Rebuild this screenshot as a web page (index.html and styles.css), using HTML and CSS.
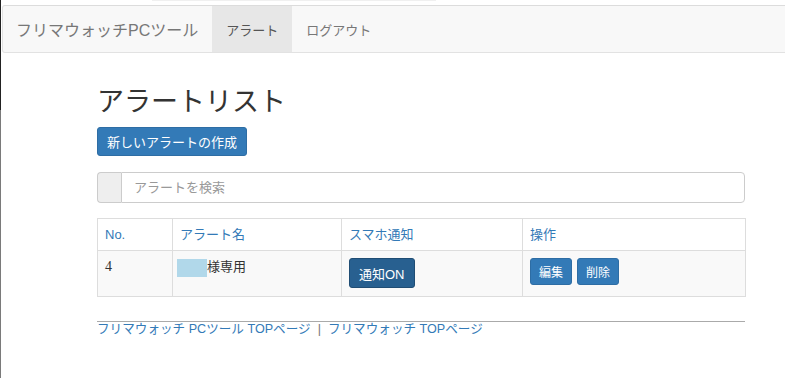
FILE: index.html
```html
<!DOCTYPE html>
<html lang="ja">
<head>
<meta charset="utf-8">
<title>アラートリスト</title>
<link rel="stylesheet" href="styles.css">
</head>
<body>
<div class="edge"></div>
<div class="page">
  <div class="topstrip"><span class="topbar"></span></div>
  <nav class="navbar">
    <a class="brand" href="#">フリマウォッチPCツール</a>
    <a class="nav-item active" href="#">アラート</a>
    <a class="nav-item" href="#">ログアウト</a>
  </nav>
  <main class="container">
    <h1 class="title">アラートリスト</h1>
    <button class="btn btn-primary btn-new">新しいアラートの作成</button>
    <div class="input-group">
      <span class="addon"></span>
      <input class="search" type="text" placeholder="アラートを検索">
    </div>
    <table class="table">
      <colgroup>
        <col class="c1"><col class="c2"><col class="c3"><col class="c4">
      </colgroup>
      <thead>
        <tr><th><a href="#">No.</a></th><th><a href="#">アラート名</a></th><th><a href="#">スマホ通知</a></th><th><a href="#">操作</a></th></tr>
      </thead>
      <tbody>
        <tr>
          <td class="num">4</td>
          <td><span class="redact"></span>様専用</td>
          <td><button class="btn btn-on">通知ON</button></td>
          <td><div class="ops"><button class="btn btn-primary btn-sm">編集</button><button class="btn btn-primary btn-sm">削除</button></div></td>
        </tr>
      </tbody>
    </table>
    <footer class="footer">
      <a href="#">フリマウォッチ PCツール TOPページ</a><span class="sep">|</span><a href="#">フリマウォッチ TOPページ</a>
    </footer>
  </main>
</div>
</body>
</html>
```
FILE: styles.css
```css
* { box-sizing: border-box; }
html, body { margin: 0; padding: 0; background: #fff; }
body {
  display: flex;
  min-height: 378px;
  font-family: "Liberation Sans", "Noto Sans CJK JP", sans-serif;
  font-size: 13px;
  color: #333;
  overflow: hidden;
}
a { text-decoration: none; color: #337ab7; }
.edge {
  width: 1px;
  flex: none;
  background: linear-gradient(#222 0, #222 110px, #7a7a7a 110px, #7a7a7a 100%);
}
.page { flex: 1; min-width: 0; padding-left: 1px; }
.topstrip { height: 5px; position: relative; }
.topbar {
  display: block;
  margin-left: 150px;
  width: 284px;
  height: 1px;
  background: #f0f0f0;
}
.navbar {
  display: flex;
  align-items: stretch;
  height: 48px;
  margin-right: -10px;
  background: #f8f8f8;
  border: 1px solid #e2e2e2;
  border-top-color: #dcdcdc;
  border-radius: 3px 0 0 3px;
}
.brand {
  display: flex;
  align-items: center;
  padding: 0 14px 0 13px;
  font-size: 16px;
  color: #777;
}
.nav-item {
  display: flex;
  align-items: center;
  padding: 0 14px 0 14px;
  color: #777;
  font-size: 13px;
}
.nav-item.active { background: #e7e7e7; color: #555; }
.container {
  width: 648px;
  margin-left: 95px;
}
.title {
  margin: 33px 0 0;
  font-size: 27px;
  font-weight: 400;
  line-height: 32px;
  color: #333;
}
.btn {
  font-family: inherit;
  border-radius: 3px;
  cursor: pointer;
  color: #fff;
}
.btn-primary { background: #337ab7; border: 1px solid #2e6da4; }
.btn-new {
  display: block;
  margin-top: 9px;
  height: 29px;
  padding: 0 9px;
  font-size: 13px;
}
.input-group {
  display: flex;
  margin-top: 16px;
  height: 31px;
}
.addon {
  width: 24px;
  flex: none;
  background: #eee;
  border: 1px solid #ccc;
  border-right: none;
  border-radius: 4px 0 0 4px;
}
.search {
  flex: 1;
  min-width: 0;
  border: 1px solid #ccc;
  border-radius: 0 4px 4px 0;
  padding: 0 12px;
  font-family: inherit;
  font-size: 13px;
  color: #555;
  outline: none;
}
.search::placeholder { color: #999; }
.table {
  width: 648px;
  margin-top: 15px;
  border-collapse: collapse;
  table-layout: fixed;
}
.c1 { width: 75px; }
.c2 { width: 169px; }
.c3 { width: 181px; }
.c4 { width: 223px; }
.table th, .table td {
  border: 1px solid #ddd;
  text-align: left;
  vertical-align: top;
  font-size: 13px;
}
.table th {
  font-weight: 400;
  padding: 7px 7px;
  height: 32px;
  line-height: 17px;
}
.table td {
  background: #f9f9f9;
  padding: 7px 7px;
  height: 46px;
  line-height: 18px;
}
.table td.num { font-family: "Liberation Serif", serif; font-size: 14px; }
.redact {
  display: inline-block;
  width: 30px;
  height: 18px;
  margin-left: -3px;
  vertical-align: top;
  margin-top: 1px;
  background: #b1d8ea;
}
.btn-on {
  display: block;
  height: 30px;
  padding: 0 9px;
  font-size: 13px;
  background: #286090;
  border: 1px solid #204d74;
  border-radius: 3px;
}
.ops { display: flex; gap: 5px; }
.btn-sm {
  height: 27px;
  padding: 0 8px;
  font-size: 12px;
}
.footer {
  margin-top: 24px;
  border-top: 1px solid #aaa;
  padding-top: 0;
  line-height: 15px;
  font-size: 12.6px;
}
.sep { color: #777; margin: 0 7px; }
```
